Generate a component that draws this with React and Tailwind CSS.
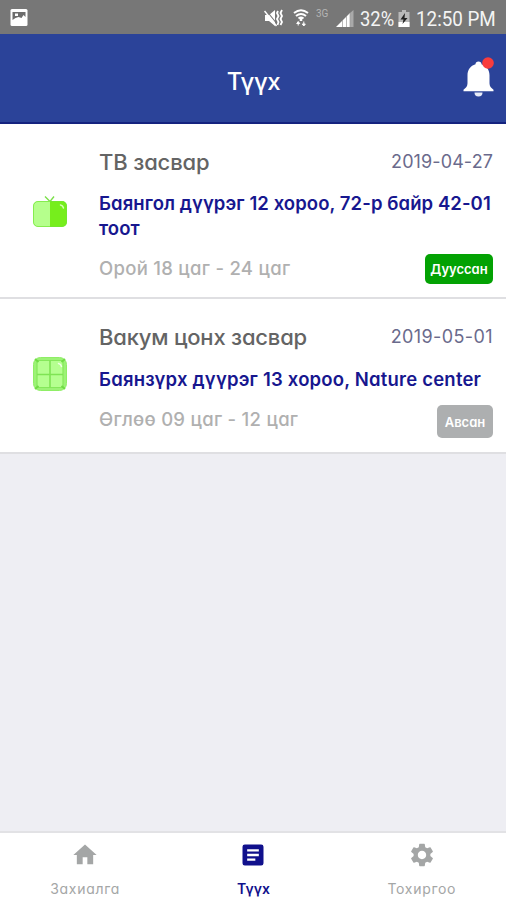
const orders = [
  {
    id: 1,
    name: 'ТВ засвар',
    nameStyle: 'tracking-[-0.15px]',
    date: '2019-04-27',
    dateStyle: 'tracking-[0.1px]',
    address: ['Баянгол дүүрэг 12 хороо, 72-р байр 42-01', 'тоот'],
    addressStyle: 'mt-[15px] tracking-[0.08px]',
    time: 'Орой 18 цаг - 24 цаг',
    status: 'Дууссан',
    statusStyle: 'bg-[#03a203] w-[68px] h-[30px] top-[-2px]',
    cardStyle: 'pb-[16px]',
    iconStyle: 'pb-[6px]',
    icon: TvIcon,
  },
  {
    id: 2,
    name: 'Вакум цонх засвар',
    nameStyle: 'tracking-[-0.2px]',
    date: '2019-05-01',
    dateStyle: 'tracking-[0.4px]',
    address: ['Баянзүрх дүүрэг 13 хороо, Nature center'],
    addressStyle: 'mt-[16px] tracking-[0.2px]',
    time: 'Өглөө 09 цаг - 12 цаг',
    status: 'Авсан',
    statusStyle: 'bg-[#adafb0] w-[56px] h-[33px] top-[-2px]',
    cardStyle: 'pb-[20px]',
    iconStyle: 'pb-[7px]',
    icon: WindowIcon,
  },
];

function TvIcon() {
  return (
    <svg width="36" height="34" viewBox="0 0 36 34" fill="none">
      <path d="M13 1.500l5 5 4-5" stroke="#7be04a" strokeWidth="1.400" />
      <path d="M6 6h12v26H6a5 5 0 0 1-5-5V11a5 5 0 0 1 5-5z" fill="#b5ff8c" />
      <path d="M18 6h12a5 5 0 0 1 5 5v16a5 5 0 0 1-5 5H18z" fill="#76ee1c" />
      <rect x="1.5" y="6.5" width="33" height="25" rx="4.5" stroke="#71e635" strokeOpacity=".7" />
      <path d="M28.500 10q2.500 .5 3 3" stroke="#d6ffb8" strokeWidth="1.500" strokeLinecap="round" />
    </svg>
  );
}

function WindowIcon() {
  return (
    <svg width="36" height="36" viewBox="0 0 36 36" fill="none">
      <rect x="1.500" y="1.500" width="33" height="33" rx="7" fill="#9cf276" stroke="#8fee66" />
      <rect x="5" y="4.500" width="26" height="27" rx="1.500" fill="#b5ff90" stroke="#85e85b" strokeWidth="1.200" />
      <path d="M18 4.500v27M5 18.500h26" stroke="#7fe454" strokeWidth="1.600" />
      <path d="M3 3l3.500 3M33 3l-3.500 3M3 33l3.500-3M33 33l-3.500-3" stroke="#6fdc44" strokeWidth="2" />
      <path d="M26.500 7.500q2.500 .5 3 3" stroke="#efffe4" strokeWidth="1.500" strokeLinecap="round" />
    </svg>
  );
}

function StatusBar() {
  return (
    <div className="relative flex h-[34px] items-center bg-[#777777] pl-[10px] font-[Roboto,sans-serif] text-[20px] text-[#f4f4f4]">
      <svg width="18" height="17" viewBox="0 0 18 17" className="mt-[1px]">
        <rect x=".5" width="17" height="17" rx="1.500" fill="#fff" />
        <path d="M2.500 3h13v5l-2-2-2 3-3-1-3 1-3 2z" fill="#6d6d6d" />
        <path d="M5 4.500h3v2.500H5z" fill="#fff" />
      </svg>
      <svg width="20" height="18" viewBox="0 0 20 18" className="ml-[236px] mt-[1px]" fill="none">
        <path d="M1 6h4l6-5v16l-6-5H1z" fill="#fff" />
        <path d="M1.500 .5l12 15" stroke="#777" strokeWidth="1.200" />
        <path d="M.5 2l12 15" stroke="#fff" strokeWidth="1.500" />
        <path d="M14 2l-1 2 1.500 3-1.500 3 1.500 3-1 3M18 1l-1.500 3 1.500 3-1.500 3 1.500 3-1.500 3" stroke="#fff" strokeWidth="1.800" />
      </svg>
      <svg width="16" height="18" viewBox="0 0 16 18" className="ml-[9px] mt-[1px]" fill="none" stroke="#fff">
        <path d="M1 4q7-5.500 14 0M3 7q5-4 10 0M5.500 9.500q2.500-2 5 0" strokeWidth="2" />
        <path d="M8 9v3" strokeWidth="2.500" />
        <path d="M3.700 14.500h3L5.200 12.500zM9.300 15h3l-1.500 2zM5.200 14v2.500M10.800 12.500v3" fill="#fff" strokeWidth="1" />
      </svg>
      <span className="mb-[7px] ml-[7px] w-[14px] text-[10px] leading-none text-[#b5b5b5]">3G</span>
      <svg width="18" height="17" viewBox="0 0 18 17" className="ml-[6px] mt-[3px]">
        <path d="M0 17L14 3v14z" fill="#fff" />
        <path d="M14 3l3.500-3v17H14z" fill="#a9a9a9" />
        <path d="M6.500 10v7M10.500 6v11M14 3v14" stroke="#999" strokeWidth=".7" />
      </svg>
      <span className="ml-[6px] mt-[3px] w-[35px] origin-left scale-x-[0.92] whitespace-nowrap">32%</span>
      <svg width="12" height="17" viewBox="0 0 12 17" className="ml-[3px] mt-[2px]">
        <path d="M4 0h4v2h3.500v15H.5V2H4z" fill="#b9b9b9" />
        <path d="M.5 12h11v5H.5z" fill="#fff" />
        <path d="M7 3L2.500 9.500h3L4.500 14 9.500 8h-3z" fill="#222" />
      </svg>
      <span className="ml-[6px] mt-[3px] w-[79px] origin-left scale-x-[0.94] whitespace-nowrap">12:50 PM</span>
    </div>
  );
}

function Header() {
  return (
    <div className="flex h-[90px] items-center justify-between border-b-2 border-[#14237f] bg-[#2b4399] pr-[12px] pl-[44px]">
      <h1 className="mt-[8px] flex-1 text-center text-[24px] leading-[30px] font-medium tracking-[-0.4px] text-white">
        Түүх
      </h1>
      <svg width="31" height="40" viewBox="0 0 31 40" className="-mt-[3px]">
        <path d="M15.500 4.500c1.800 0 3 1 3 2.800 5 1.500 8 5.500 8 11v8c0 3 1.500 4.500 4 6.500v1.500H.5v-1.500c2.500-2 4-3.500 4-6.500v-8c0-5.500 3-9.500 8-11 0-1.800 1.200-2.800 3-2.800z" fill="#fff" />
        <path d="M11.500 35.500h8a4 4 0 0 1-8 0z" fill="#e8ecf8" />
        <circle cx="25" cy="6" r="5.800" fill="#f93c3c" />
      </svg>
    </div>
  );
}

function OrderCard({ order }) {
  const Icon = order.icon;
  return (
    <div className={`flex border-b-2 border-[#dfdfe2] bg-white pt-[24px] pr-[13px] ${order.cardStyle}`}>
      <div className={`flex w-[99px] items-center justify-center ${order.iconStyle}`}>
        <Icon />
      </div>
      <div className="flex-1">
        <div className="flex justify-between">
          <span className={`text-[22px] leading-[28px] font-medium text-[#646464] ${order.nameStyle}`}>{order.name}</span>
          <span className={`text-[18px] leading-[28px] text-[#6a6a8c] ${order.dateStyle}`}>{order.date}</span>
        </div>
        <p className={`text-[18.500px] leading-[25px] font-semibold whitespace-nowrap text-[#17178f] ${order.addressStyle}`}>
          {order.address.map((line) => (
            <span key={line} className="block">{line}</span>
          ))}
        </p>
        <div className="mt-[15px] flex h-[25px] items-start justify-between">
          <span className="text-[18.500px] leading-[25px] font-medium tracking-[0.28px] text-[#b0b0b0]">{order.time}</span>
          <span className={`relative flex items-center justify-center rounded-[5px] pt-[2px] text-[13px] font-semibold text-white ${order.statusStyle}`}>
            {order.status}
          </span>
        </div>
      </div>
    </div>
  );
}

function Tab({ label, active, children }) {
  return (
    <div className={`flex flex-1 flex-col items-center pt-[8px] text-[14px] ${active ? 'font-semibold text-[#10108c]' : 'tracking-[0.7px] text-[#a4a6a6]'}`}>
      <svg width="28" height="28" viewBox="0 0 24 24" fill="currentColor">{children}</svg>
      <span className="mt-[10px] leading-[20px]">{label}</span>
    </div>
  );
}

export default function App() {
  return (
    <div className="flex h-[900px] w-[506px] flex-col overflow-hidden bg-[#eeeef3] font-[Inter,sans-serif] [font-feature-settings:'cv11']">
      <StatusBar />
      <Header />
      <div className="flex-1">
        {orders.map((order) => (
          <OrderCard key={order.id} order={order} />
        ))}
      </div>
      <div className="flex h-[69px] border-t-2 border-[#e2e2e5] bg-white pl-[1px]">
        <Tab label="Захиалга">
          <path d="M10 20v-6h4v6h5v-8h3L12 3 2 12h3v8z" />
        </Tab>
        <Tab label="Түүх" active>
          <path d="M19 3H5a2 2 0 0 0-2 2v14a2 2 0 0 0 2 2h14a2 2 0 0 0 2-2V5a2 2 0 0 0-2-2zm-5 14H7v-2h7v2zm3-4H7v-2h10v2zm0-4H7V7h10v2z" />
        </Tab>
        <Tab label="Тохиргоо">
          <path d="M19.140 12.940c.04-.3.060-.61.060-.94 0-.32-.02-.64-.07-.94l2.030-1.580c.18-.14.230-.41.120-.61l-1.920-3.320c-.12-.22-.37-.29-.59-.22l-2.390.96c-.5-.38-1.030-.7-1.620-.94l-.36-2.540c-.04-.24-.24-.41-.48-.41h-3.840c-.24 0-.43.170-.47.410l-.36 2.540c-.59.240-1.130.570-1.620.940l-2.390-.96c-.22-.08-.47 0-.59.220L2.740 8.870c-.12.210-.08.470.120.610l2.030 1.580c-.05.300-.09.630-.09.940s.02.640.070.940l-2.030 1.580c-.18.140-.23.410-.12.610l1.920 3.320c.12.220.370.290.590.220l2.390-.96c.5.380 1.030.700 1.620.940l.36 2.540c.05.240.240.410.480.410h3.840c.24 0 .44-.17.470-.41l.36-2.540c.59-.24 1.130-.56 1.620-.94l2.390.96c.22.080.470 0 .590-.22l1.920-3.320c.12-.22.070-.47-.12-.61l-2.010-1.580zM12 15.600c-1.980 0-3.600-1.620-3.600-3.600s1.620-3.600 3.600-3.600 3.600 1.620 3.600 3.600-1.620 3.600-3.600 3.600z" />
        </Tab>
      </div>
    </div>
  );
}
